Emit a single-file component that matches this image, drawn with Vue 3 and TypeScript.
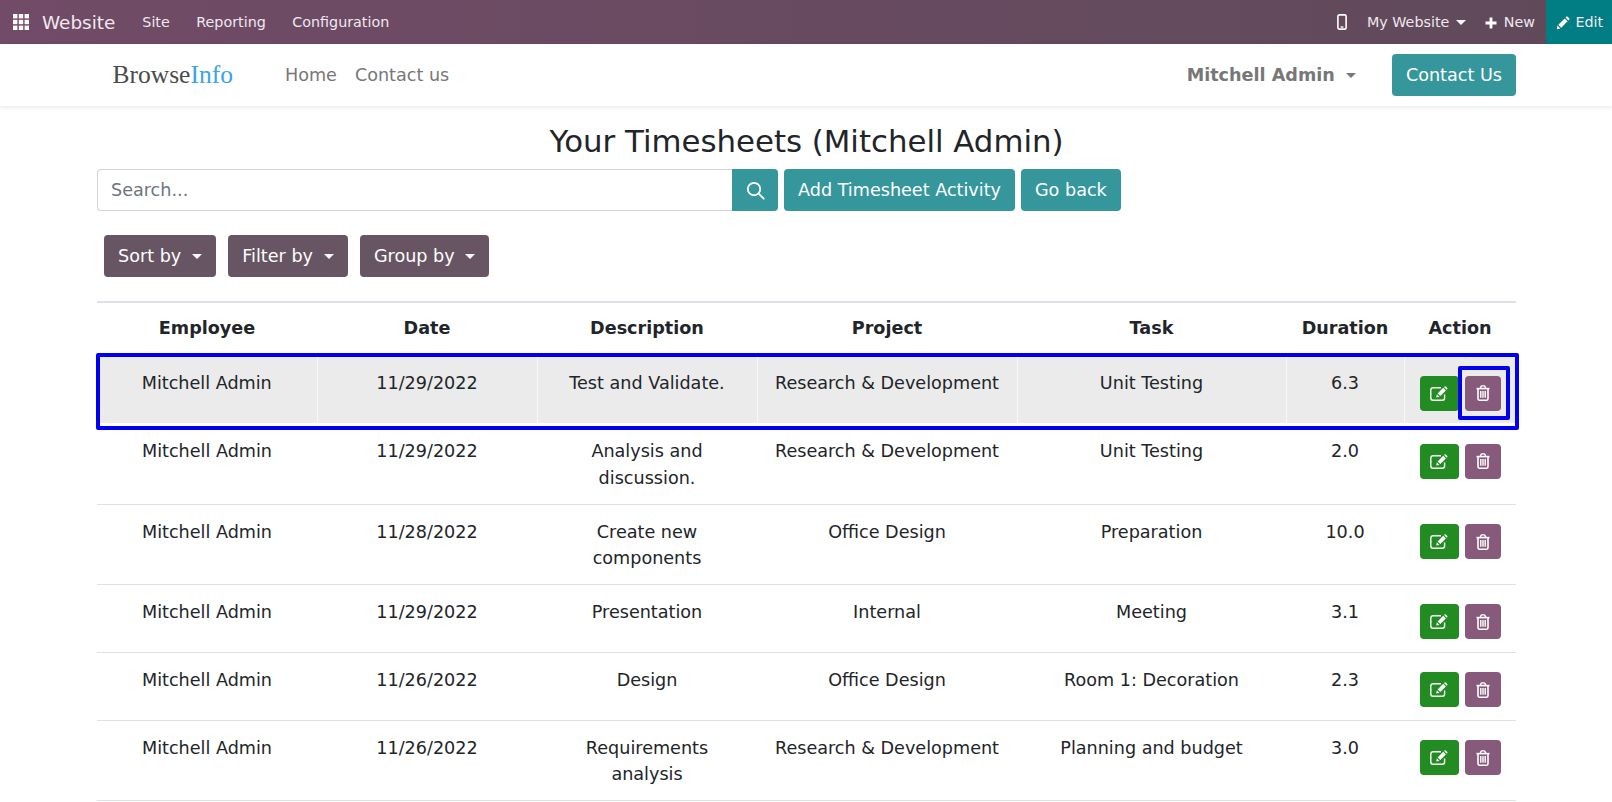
<template>
  <div class="page">
    <header class="topbar">
      <div class="topbar-left">
        <svg class="apps" viewBox="0 0 16 16" width="16" height="16" fill="#fff">
          <rect v-for="c in appCells" :key="c.x + '-' + c.y" :x="c.x" :y="c.y" width="4.4" height="4.4" />
        </svg>
        <span class="brand">Website</span>
        <a class="menu" v-for="m in menus" :key="m">{{ m }}</a>
      </div>
      <div class="topbar-right">
        <svg class="mobile" viewBox="0 0 10 16" width="10" height="16" fill="none" stroke="#fff">
          <rect x="0.9" y="0.9" width="8.2" height="14.2" rx="1.4" stroke-width="1.6" />
          <rect x="3.6" y="12.3" width="2.8" height="1.4" fill="#fff" stroke="none" />
        </svg>
        <span class="top-item site">My Website <i class="caret small"></i></span>
        <span class="top-item new">
          <svg viewBox="0 0 12 12" width="12" height="12" fill="#fff"><path d="M4.6 0.5h2.8v4.1h4.1v2.8H7.4v4.1H4.6V7.4H0.5V4.6h4.1z" /></svg>
          New
        </span>
        <span class="edit-btn">
          <svg viewBox="0 0 14 14" width="14" height="14" fill="#fff"><path d="M0.8 13.2l.7-3.6 2.9 2.9zM2.3 8.8l6.4-6.4 2.9 2.9-6.4 6.4zM9.5 1.6l.8-.8c.4-.4 1-.4 1.4 0l1.5 1.5c.4.4.4 1 0 1.4l-.8.8z" /></svg>
          Edit
        </span>
      </div>
    </header>

    <nav class="sitenav">
      <div class="logo">Browse<span>Info</span></div>
      <a class="link">Home</a>
      <a class="link">Contact us</a>
      <span class="user">Mitchell Admin <i class="caret grey"></i></span>
      <a class="btn">Contact Us</a>
    </nav>

    <main class="content">
      <h1>Your Timesheets (Mitchell Admin)</h1>
      <div class="search-row">
        <div class="search">
          <input type="text" placeholder="Search..." />
          <button class="btn search-btn" aria-label="Search">
            <svg viewBox="0 0 18 18" width="19" height="19" fill="none" stroke="#fff" stroke-width="1.7" stroke-linecap="round">
              <circle cx="7.6" cy="7.6" r="5.9" />
              <path d="M12 12l4.8 4.8" />
            </svg>
          </button>
        </div>
        <a class="btn">Add Timesheet Activity</a>
        <a class="btn">Go back</a>
      </div>

      <div class="filters">
        <a class="btn dark" v-for="f in filters" :key="f">{{ f }} <i class="caret"></i></a>
      </div>

      <div class="table-wrap">
        <table>
          <colgroup>
            <col v-for="w in colWidths" :key="w.name" :style="{ width: w.px + 'px' }" />
          </colgroup>
          <thead>
            <tr>
              <th v-for="w in colWidths" :key="w.name">{{ w.name }}</th>
            </tr>
          </thead>
          <tbody>
            <tr v-for="(r, i) in rows" :key="i" :class="{ hovered: i === 0 }">
              <td>Mitchell Admin</td>
              <td>{{ r.date }}</td>
              <td>{{ r.desc }}</td>
              <td>{{ r.project }}</td>
              <td>{{ r.task }}</td>
              <td>{{ r.duration }}</td>
              <td class="actions">
                <div class="action-btns">
                  <a class="act green">
                    <svg viewBox="0 0 18 15" width="18" height="15" fill="none" stroke="#fff">
                      <path d="M14.6 8.5v3.6c0 1.3-.9 2.2-2.2 2.2H3c-1.3 0-2.2-.9-2.2-2.2V3.9c0-1.3.9-2.2 2.2-2.2h8" stroke-width="1.4" />
                      <path d="M6.2 11.6l.6-3.3 2.7 2.7z" fill="#fff" stroke="none" />
                      <path d="M7.6 7.4l5.6-5.6 2.7 2.7-5.6 5.6zM14 1l.6-.6c.3-.3.8-.3 1.1 0l1.6 1.6c.3.3.3.8 0 1.1l-.6.6z" fill="#fff" stroke="none" />
                    </svg>
                  </a>
                  <a class="act purple">
                    <svg viewBox="0 0 14 16" width="14" height="16" fill="none" stroke="#fff">
                      <path d="M0.5 3.6h13" stroke-width="1.6" />
                      <path d="M4.3 3.2l.8-1.8c.1-.3.4-.5.7-.5h2.4c.3 0 .6.2.7.5l.8 1.8" stroke-width="1.4" />
                      <path d="M2 3.6v10c0 .9.5 1.6 1.2 1.6h7.6c.7 0 1.2-.7 1.2-1.6v-10" stroke-width="1.6" />
                      <path d="M4.8 6v6.8M7 6v6.8M9.2 6v6.8" stroke-width="1.4" />
                    </svg>
                  </a>
                </div>
              </td>
            </tr>
          </tbody>
        </table>
        <div class="mark mark-row"></div>
        <div class="mark mark-btn"></div>
      </div>
    </main>
  </div>
</template>

<script setup lang="ts">
interface Row {
  date: string
  desc: string
  project: string
  task: string
  duration: string
}

const menus = ['Site', 'Reporting', 'Configuration']
const filters = ['Sort by', 'Filter by', 'Group by']

const appCells: { x: number; y: number }[] = []
for (let y = 0; y < 3; y++) {
  for (let x = 0; x < 3; x++) {
    appCells.push({ x: x * 5.8, y: y * 5.8 })
  }
}

const colWidths = [
  { name: 'Employee', px: 220 },
  { name: 'Date', px: 220 },
  { name: 'Description', px: 220 },
  { name: 'Project', px: 260 },
  { name: 'Task', px: 269 },
  { name: 'Duration', px: 118 },
  { name: 'Action', px: 112 },
]

const rows: Row[] = [
  { date: '11/29/2022', desc: 'Test and Validate.', project: 'Research & Development', task: 'Unit Testing', duration: '6.3' },
  { date: '11/29/2022', desc: 'Analysis and discussion.', project: 'Research & Development', task: 'Unit Testing', duration: '2.0' },
  { date: '11/28/2022', desc: 'Create new components', project: 'Office Design', task: 'Preparation', duration: '10.0' },
  { date: '11/29/2022', desc: 'Presentation', project: 'Internal', task: 'Meeting', duration: '3.1' },
  { date: '11/26/2022', desc: 'Design', project: 'Office Design', task: 'Room 1: Decoration', duration: '2.3' },
  { date: '11/26/2022', desc: 'Requirements analysis', project: 'Research & Development', task: 'Planning and budget', duration: '3.0' },
]
</script>

<style>
html,
body {
  margin: 0;
  background: #fff;
  overflow: hidden;
}
</style>

<style scoped>
.page {
  font-family: "DejaVu Sans", sans-serif;
  color: #212529;
  font-size: 17.6px;
  line-height: 1.5;
  height: 802px;
  overflow: hidden;
}

.topbar {
  height: 44px;
  display: flex;
  justify-content: space-between;
  background: linear-gradient(90deg, #714b67, #5f4a5a);
  color: #f0e8ee;
  font-size: 14.3px;
}
.topbar-left,
.topbar-right {
  display: flex;
  align-items: center;
}
.apps {
  margin-left: 13px;
}
.brand {
  font-size: 18.4px;
  margin-left: 13px;
  margin-right: 27px;
}
.menu {
  margin-right: 26.5px;
}
.brand,
.menu,
.top-item,
.edit-btn {
  padding-top: 1px;
}
.mobile {
  margin-right: 20px;
}
.top-item {
  display: flex;
  align-items: center;
  gap: 7px;
}
.site {
  gap: 6.5px;
  margin-right: 19px;
}
.new {
  margin-right: 11px;
}
.edit-btn {
  box-sizing: border-box;
  width: 66px;
  height: 44px;
  display: flex;
  align-items: center;
  gap: 6px;
  padding-left: 9.5px;
  background: #017e84;
}

.caret {
  display: inline-block;
  width: 0;
  height: 0;
  margin-left: 5px;
  vertical-align: 3px;
  border-top: 5px solid #fff;
  border-left: 5px solid transparent;
  border-right: 5px solid transparent;
}
.caret.small {
  margin-left: 0;
}
.caret.grey {
  border-top-color: #777;
}

.sitenav {
  height: 62px;
  display: flex;
  align-items: center;
  padding: 0 96px 0 112.5px;
  background: #fff;
  box-shadow: 0 1px 5px rgba(0, 0, 0, 0.1);
  position: relative;
}
.logo {
  font-family: "Liberation Serif", serif;
  font-size: 25.5px;
  color: #4b4b4b;
  margin-right: 52px;
}
.logo span {
  color: #3aa4e6;
}
.link {
  color: #777;
  margin-right: 18px;
}
.user {
  margin-left: auto;
  margin-right: 36px;
  font-weight: 700;
  color: #777;
}

.btn {
  display: inline-block;
  box-sizing: border-box;
  height: 42px;
  padding: 0 14px;
  border: 0;
  border-radius: 4px;
  background: #35979c;
  color: #fff;
  font: inherit;
  line-height: 42px;
}

.content {
  padding: 0 96px 0 97px;
}
h1 {
  margin: 12px 0 0;
  height: 51px;
  font-size: 30.8px;
  font-weight: 400;
  line-height: 47px;
  text-align: center;
}
.search-row {
  display: flex;
  gap: 6px;
}
.search {
  display: flex;
  width: 681px;
}
.search input {
  flex: 1;
  min-width: 0;
  box-sizing: border-box;
  height: 42px;
  padding: 0 13px;
  border: 1px solid #ced4da;
  border-right: 0;
  border-radius: 4px 0 0 4px;
  font: inherit;
  color: #212529;
  outline: none;
}
.search input::placeholder {
  color: #6c757d;
}
.search-btn {
  width: 46px;
  padding: 0;
  display: flex;
  align-items: center;
  justify-content: center;
  border-radius: 0 4px 4px 0;
}

.filters {
  display: flex;
  gap: 12.4px;
  margin: 24px 0 0 7px;
}
.dark {
  background: #685563;
}

.table-wrap {
  position: relative;
  margin-top: 24px;
}
table {
  width: 100%;
  table-layout: fixed;
  border-collapse: collapse;
  border-top: 2px solid #dee2e6;
}
th {
  padding: 12px 4px 14px;
  font-weight: 700;
  text-align: center;
}
td {
  padding: 14px 13.2px 12.4px;
  text-align: center;
  vertical-align: top;
  border-top: 1px solid #dee2e6;
}
tbody tr:last-child td {
  border-bottom: 1px solid #dee2e6;
}
.hovered td {
  background: #ebebeb;
  border-top-color: #ebebeb;
  border-left: 1px solid #f7f7f7;
}
.hovered td:first-child {
  border-left: 0;
}
.hovered + tr td {
  border-top-color: #fff;
}
td.actions {
  padding-left: 4px;
  padding-right: 4px;
}
.action-btns {
  display: flex;
  justify-content: center;
  gap: 6px;
  padding-top: 5.5px;
  margin-bottom: 0.1px;
}
.act {
  height: 35px;
  display: flex;
  align-items: center;
  justify-content: center;
  border-radius: 4px;
}
.green {
  width: 39px;
  background: #228b22;
}
.purple {
  width: 36px;
  background: #875a7b;
}

.mark {
  position: absolute;
  box-sizing: border-box;
  border: 4px solid #0000ee;
  border-radius: 2px;
  pointer-events: none;
}
.mark-row {
  left: -1px;
  top: 52px;
  width: 1423px;
  height: 77px;
}
.mark-btn {
  left: 1361px;
  top: 65px;
  width: 52px;
  height: 54px;
}
</style>
